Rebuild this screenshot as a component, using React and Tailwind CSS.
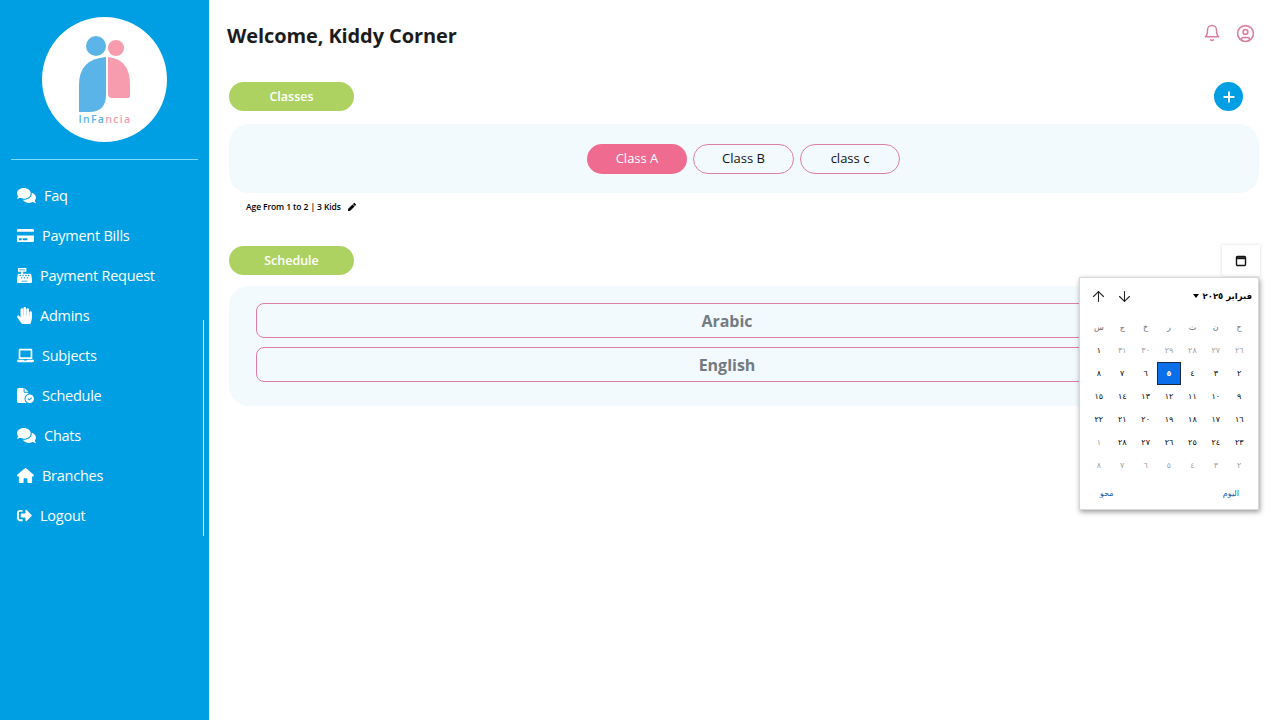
import React from "react";
import {
  FaComments,
  FaCreditCard,
  FaCashRegister,
  FaHandPaper,
  FaLaptop,
  FaSignOutAlt,
  FaPen,
} from "react-icons/fa";
import { FaFileCircleCheck, FaHouse } from "react-icons/fa6";
import { FiBell, FiArrowUp, FiArrowDown, FiPlus } from "react-icons/fi";
import { LuCircleUser } from "react-icons/lu";

const menu = [
  { label: "Faq", icon: FaComments, size: "w-[19px]" },
  { label: "Payment Bills", icon: FaCreditCard, size: "w-[17px]" },
  { label: "Payment Request", icon: FaCashRegister, size: "w-[15px]" },
  { label: "Admins", icon: FaHandPaper, size: "w-[15px]" },
  { label: "Subjects", icon: FaLaptop, size: "w-[17px]" },
  { label: "Schedule", icon: FaFileCircleCheck, size: "w-[17px]" },
  { label: "Chats", icon: FaComments, size: "w-[19px]" },
  { label: "Branches", icon: FaHouse, size: "w-[17px]" },
  { label: "Logout", icon: FaSignOutAlt, size: "w-[15px]" },
];

const weekDays = ["ح", "ن", "ث", "ر", "خ", "ج", "س"];

const days = [
  ["٢٦", true], ["٢٧", true], ["٢٨", true], ["٢٩", true], ["٣٠", true], ["٣١", true], ["١", false],
  ["٢", false], ["٣", false], ["٤", false], ["٥", false], ["٦", false], ["٧", false], ["٨", false],
  ["٩", false], ["١٠", false], ["١١", false], ["١٢", false], ["١٣", false], ["١٤", false], ["١٥", false],
  ["١٦", false], ["١٧", false], ["١٨", false], ["١٩", false], ["٢٠", false], ["٢١", false], ["٢٢", false],
  ["٢٣", false], ["٢٤", false], ["٢٥", false], ["٢٦", false], ["٢٧", false], ["٢٨", false], ["١", true],
  ["٢", true], ["٣", true], ["٤", true], ["٥", true], ["٦", true], ["٧", true], ["٨", true],
];

const Logo = () => (
  <div className="w-[125px] h-[125px] rounded-full bg-white mx-auto">
    <svg viewBox="0 0 125 125" className="w-full h-full">
      <circle cx="54" cy="29" r="10" fill="#5ab4e8" />
      <circle cx="74" cy="31" r="8" fill="#f79cae" />
      <path d="M64 40 V78 Q64 95 47 95 H37 V68 Q37 42 64 40 Z" fill="#5ab4e8" />
      <path d="M66 40 Q88 42 88 68 V79 Q88 81 86 81 H70 Q66 81 66 77 Z" fill="#f79cae" />
      <text x="36.5" y="106" fontSize="10.5" fontWeight="600" letterSpacing="1.3" fontFamily="Open Sans, sans-serif">
        <tspan fill="#5ab4e8">InFa</tspan>
        <tspan fill="#f79cae">ncia</tspan>
      </text>
    </svg>
  </div>
);

const Sidebar = () => (
  <aside className="relative w-[209px] h-[720px] shrink-0 bg-[#009fe3] pt-[17px] text-white">
    <Logo />
    <div className="mx-[11px] mt-[17px] border-t border-[#7fdcff]" />
    <nav className="mt-4 pl-[17px] flex flex-col">
      {menu.map((item) => {
        const Icon = item.icon;
        return (
          <div key={item.label} className="h-10 flex items-center gap-2 text-[14.5px] tracking-[-0.25px]">
            <span className={`${item.size} flex justify-center -mt-px`}>
              <Icon className={`${item.size} h-[17px]`} />
            </span>
            <span className="-mt-px">{item.label}</span>
          </div>
        );
      })}
    </nav>
    <div className="absolute left-[203px] top-[320px] w-px h-[216px] bg-white" />
  </aside>
);

const Pill = ({ children }) => (
  <div className="w-[125px] h-[29px] pt-[2px] rounded-full bg-[#aed262] text-white text-[12.5px] font-semibold flex items-center justify-center">
    {children}
  </div>
);

const ClassTab = ({ label, active, wide }) => (
  <div
    className={
      active
        ? "w-[100px] h-[30px] rounded-full bg-[#ef6c90] text-white text-[13px] flex items-center justify-center"
        : wide
          ? "w-[101px] h-[30px] rounded-full border border-[#dd7fa0] text-[#111] text-[13px] flex items-center justify-center"
          : "w-[100px] h-[30px] rounded-full border border-[#dd7fa0] text-[#111] text-[13px] flex items-center justify-center"
    }
  >
    {label}
  </div>
);

const CalendarPopup = () => (
  <div className="absolute left-[1079px] top-[277px] w-[180px] h-[233px] bg-white border border-[#d8d8d8] shadow-[1px_2px_5px_rgba(0,0,0,0.4)] font-['DejaVu_Sans',sans-serif] text-black z-10">
    <div className="h-[36px] mb-[2px] flex items-center justify-between pl-[10px] pr-[6px]">
      <div className="flex items-center gap-[9px] text-[#222]">
        <FiArrowUp className="w-[17px] h-[17px]" strokeWidth={1.5} />
        <FiArrowDown className="w-[17px] h-[17px]" strokeWidth={1.5} />
      </div>
      <div className="flex items-center gap-1 text-[8.5px] font-bold">
        <span className="w-0 h-0 border-x-[3px] border-x-transparent border-t-[4px] border-t-black" />
        <span dir="rtl">فبراير ٢٠٢٥</span>
      </div>
    </div>
    <div dir="rtl" className="grid grid-cols-[repeat(7,23.4px)] justify-center">
      {weekDays.map((d) => (
        <div key={d} className="h-[23px] flex items-center justify-center text-[8px] text-[#666]">
          {d}
        </div>
      ))}
      {days.map(([d, muted], i) => (
        <div
          key={i}
          className={
            i === 10
              ? "h-[23px] flex items-center justify-center text-[8px] font-bold bg-[#0a6fe8] border border-[#1a2a44] text-white"
              : muted
                ? "h-[23px] flex items-center justify-center text-[8px] text-[#a0a0a0]"
                : "h-[23px] flex items-center justify-center text-[8px] text-black"
          }
        >
          {d}
        </div>
      ))}
    </div>
    <div className="flex justify-between pl-5 pr-[19px] mt-[11px] text-[8px] text-[#0b63b5]">
      <span>محو</span>
      <span>اليوم</span>
    </div>
  </div>
);

export default function App() {
  return (
    <div className="relative flex w-full h-[720px] overflow-hidden bg-white font-['Open_Sans',sans-serif]">
      <Sidebar />
      <main className="flex-1 pl-5 pr-[21px]">
        <header className="h-[72px] flex items-center justify-between">
          <h1 className="-ml-0.5 text-[20px] font-bold tracking-[-0.1px] text-[#1c1c1c]">Welcome, Kiddy Corner</h1>
          <div className="flex items-center gap-[15px] -mt-[6px] mr-[4px] text-[#dc7f9e]">
            <FiBell className="w-[18px] h-[18px]" />
            <LuCircleUser className="w-[19px] h-[19px]" />
          </div>
        </header>

        <section className="mt-[10px]">
          <div className="flex items-center justify-between">
            <Pill>Classes</Pill>
            <div className="w-[29px] h-[29px] mr-[16px] rounded-full bg-[#009fe3] text-white flex items-center justify-center">
              <FiPlus className="w-[16px] h-[16px]" strokeWidth={3} />
            </div>
          </div>
          <div className="mt-[13px] h-[69px] pr-px rounded-[20px] bg-[#f3fafe] flex items-center justify-center gap-[6px]">
            <ClassTab label="Class A" active />
            <ClassTab label="Class B" wide />
            <ClassTab label="class c" />
          </div>
          <div className="mt-[7px] h-[14px] ml-[17px] flex items-center gap-[7px] text-[8.5px] tracking-[-0.1px] font-semibold text-black">
            <span>Age From 1 to 2 | 3 Kids</span>
            <FaPen className="w-2 h-2" />
          </div>
        </section>

        <section className="mt-[32px]">
          <div className="flex items-start justify-between">
            <Pill>Schedule</Pill>
            <div className="w-[38px] h-[31px] -mt-px -mr-px bg-white shadow-[0_0_3px_rgba(0,0,0,0.15)] flex items-center justify-center">
              <svg viewBox="0 0 12 12" className="w-3 h-3" fill="none" stroke="#111">
                <rect x="1.5" y="1.5" width="9" height="9" rx="1" strokeWidth="1.4" />
                <path d="M1.5 3.2 H10.5" strokeWidth="2" />
              </svg>
            </div>
          </div>
          <div className="mt-[10px] h-[120px] rounded-[20px] bg-[#f3fafe] pl-[27px] pr-[61px] pt-[17px] flex flex-col gap-[9px]">
            {["Arabic", "English"].map((s) => (
              <div
                key={s}
                className="h-[35px] pt-px rounded-lg border border-[#dd7fa0] flex items-center justify-center text-[16px] font-bold text-[#747b82]"
              >
                {s}
              </div>
            ))}
          </div>
        </section>
      </main>
      <CalendarPopup />
    </div>
  );
}
